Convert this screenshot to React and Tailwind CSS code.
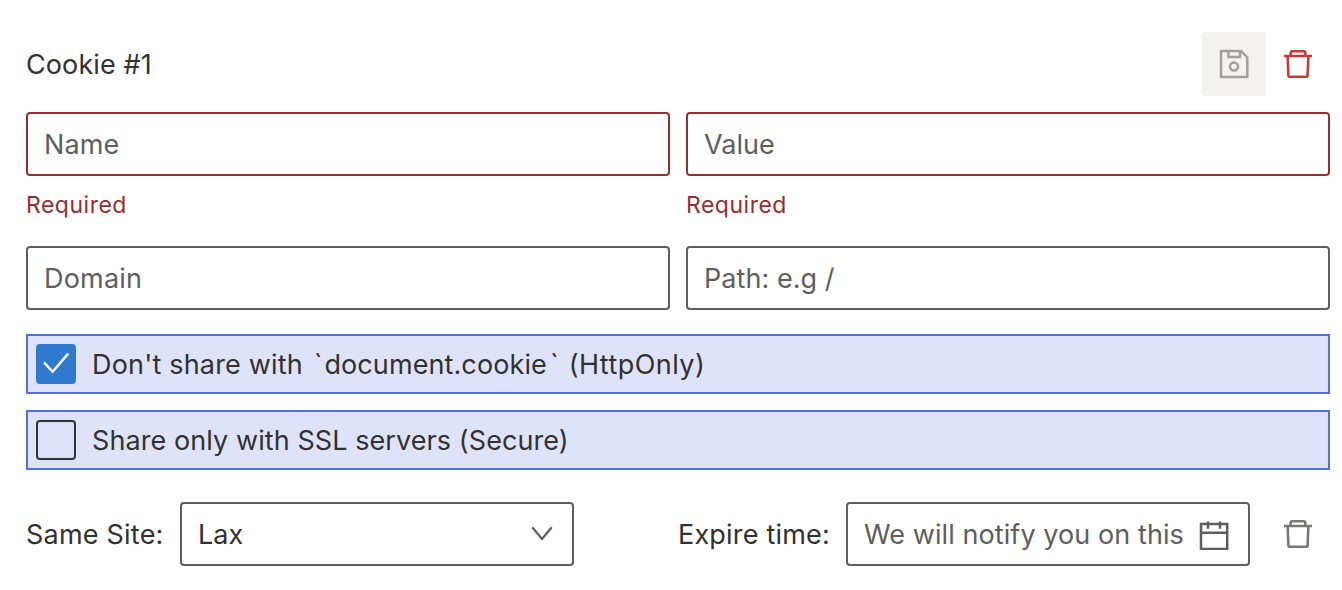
function Trash({ className }) {
  return (
    <svg className={className} width="32" height="32" viewBox="0 0 32 32" fill="none" stroke="currentColor" strokeWidth="2.6">
      <path d="M2 8H30M8.7 8V4.7Q8.7 3.2 10.2 3.2H21.8Q23.3 3.2 23.3 4.7V8M5.6 8L6.4 27.3Q6.5 28.8 8 28.8H24Q25.5 28.8 25.6 27.3L26.4 8" />
    </svg>
  );
}

function Save() {
  return (
    <svg width="32" height="32" viewBox="0 0 32 32" fill="none" stroke="currentColor" strokeWidth="2.5">
      <path d="M3 2.9H23L29.3 9.4V28.9H3Z" />
      <path d="M10.5 3V9H22V3" />
      <circle cx="16" cy="18.6" r="4" />
    </svg>
  );
}

function Calendar() {
  return (
    <svg className="shrink-0" width="32" height="32" viewBox="0 0 32 32" fill="none" stroke="currentColor" strokeWidth="2.5">
      <path d="M3 6H29.2V31H3ZM3 14.7H29.2M10 3.6V10.8M22 3.6V10.8" />
    </svg>
  );
}

function Field({ label, error, tracking = '' }) {
  return (
    <div className={`flex h-16 items-center rounded border-2 px-4 pt-0.5 text-[#605e5c] ${error ? 'border-[#972e31]' : 'border-[#605e5c]'}`}>
      <span className={tracking}>{label}</span>
    </div>
  );
}

export default function App() {
  return (
    <div className="flex h-[590px] w-[1342px] flex-col bg-white pt-8 pr-3 pl-[26px] font-[Inter,sans-serif] text-[27px] leading-10 whitespace-nowrap text-[#323130]">
      <div className="flex h-16 items-center justify-between">
        <span className="pt-0.5 tracking-[0.1px]">Cookie #1</span>
        <div className="flex">
          <button className="flex size-16 items-center justify-center rounded bg-[#f3f2f1] text-[#a19f9d]"><Save /></button>
          <button className="flex size-16 items-center justify-center text-[#c73a3a]"><Trash /></button>
        </div>
      </div>
      <div className="mt-4 grid grid-cols-2 gap-x-4">
        <Field label="Name" error tracking="tracking-[0.1px]" />
        <Field label="Value" error />
        <span className="pt-[9px] text-[23px] tracking-[0.5px] text-[#972e31]">Required</span>
        <span className="pt-[9px] text-[23px] tracking-[0.5px] text-[#972e31]">Required</span>
      </div>
      <div className="mt-[21px] grid grid-cols-2 gap-x-4">
        <Field label="Domain" tracking="tracking-[0.2px]" />
        <Field label="Path: e.g /" tracking="tracking-[0.05px]" />
      </div>
      <div className="mt-6 flex h-[60px] items-center gap-4 border-2 border-[#526fe5] bg-[#dfe3f9] pl-2">
        <span className="flex size-10 items-center justify-center rounded bg-[#2f7acf] text-white">
          <svg width="40" height="40" viewBox="0 0 40 40" fill="none" stroke="currentColor" strokeWidth="2.4"><path d="M8 18.4L16.6 27.8L32.2 9.6" /></svg>
        </span>
        <span className="pt-0.5 tracking-[0.18px]">
          Don't share with <span className="ml-[3px] tracking-[2px]">`</span><span className="tracking-[0.1px]">document.cookie</span><span className="ml-[3px] tracking-[2px]">`</span><span className="tracking-[0.44px]"> (HttpOnly)</span>
        </span>
      </div>
      <div className="mt-4 flex h-[60px] items-center gap-4 border-2 border-[#526fe5] bg-[#dfe3f9] pl-2">
        <span className="size-10 rounded border-2 border-[#323130]" />
        <span className="pt-0.5 tracking-[0.08px]">Share only with SSL servers (Secure)</span>
      </div>
      <div className="mt-8 flex h-16 items-center">
        <span className="w-[154px] pt-0.5 tracking-[0.22px]">Same Site:</span>
        <div className="flex h-16 w-[394px] items-center justify-between rounded border-2 border-[#605e5c] pr-[18px] pl-4">
          <span className="pt-0.5">Lax</span>
          <svg className="text-[#605e5c]" width="24" height="24" viewBox="0 0 24 24" fill="none" stroke="currentColor" strokeWidth="2.2"><path d="M2.3 5.2L12 17L21.7 5.2" /></svg>
        </div>
        <span className="ml-[104px] w-[168px] pt-0.5 tracking-[0.2px]">Expire time:</span>
        <div className="flex h-16 w-[404px] items-center justify-between rounded border-2 border-[#605e5c] pr-[18px] pl-4 text-[#605e5c]">
          <span className="w-[320px] overflow-hidden pt-0.5 tracking-[0.08px]">We will notify you on this</span>
          <Calendar />
        </div>
        <button className="flex size-16 items-center justify-center pl-8 text-[#797775]"><Trash className="shrink-0" /></button>
      </div>
    </div>
  );
}
